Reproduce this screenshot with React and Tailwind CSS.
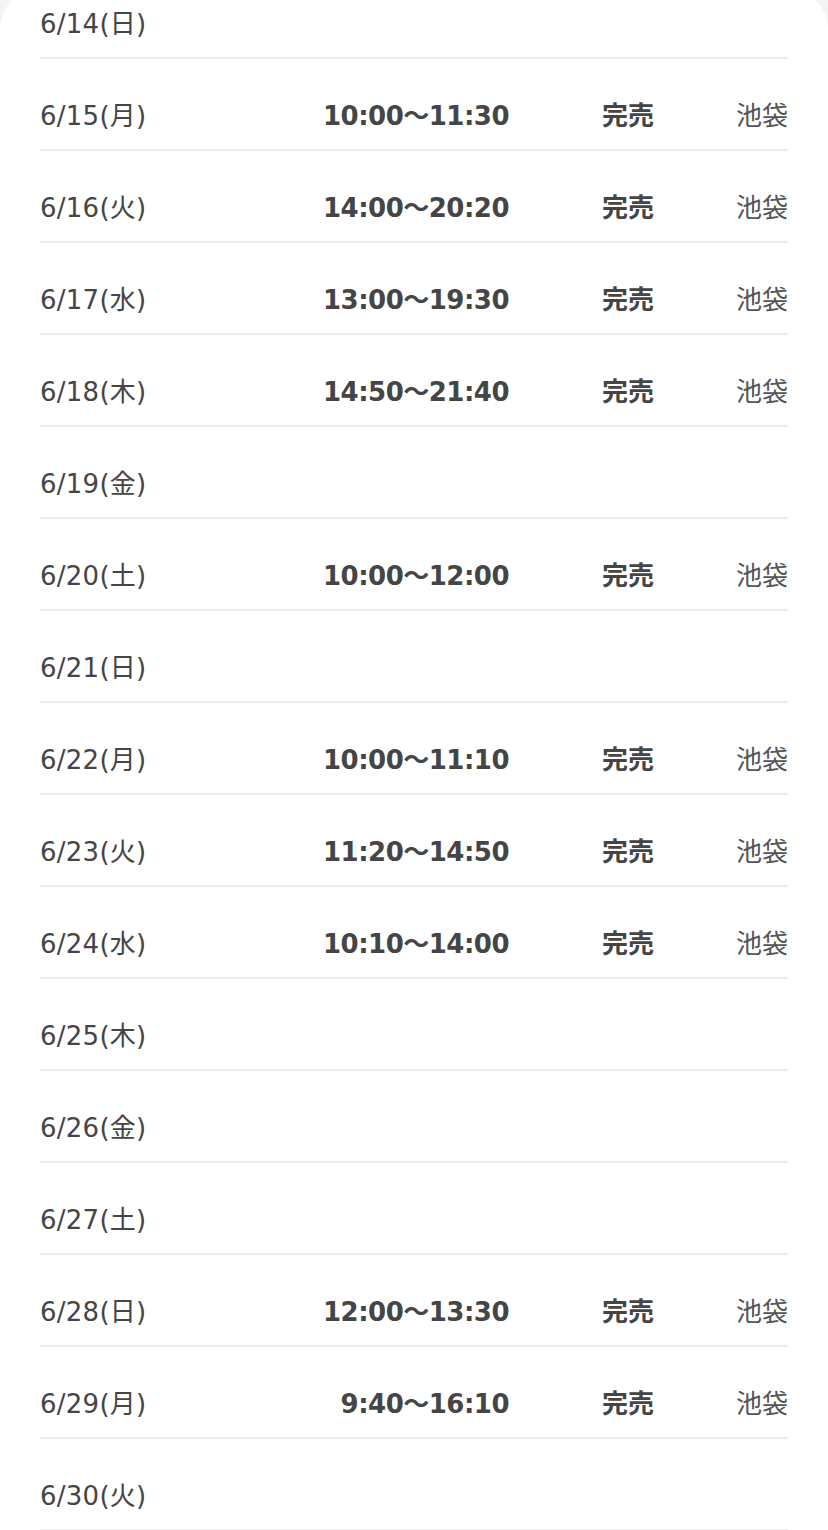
import React from 'react';

const rows = [
  { date: '6/14(日)' },
  { date: '6/15(月)', time: '10:00〜11:30', status: '完売', place: '池袋' },
  { date: '6/16(火)', time: '14:00〜20:20', status: '完売', place: '池袋' },
  { date: '6/17(水)', time: '13:00〜19:30', status: '完売', place: '池袋' },
  { date: '6/18(木)', time: '14:50〜21:40', status: '完売', place: '池袋' },
  { date: '6/19(金)' },
  { date: '6/20(土)', time: '10:00〜12:00', status: '完売', place: '池袋' },
  { date: '6/21(日)' },
  { date: '6/22(月)', time: '10:00〜11:10', status: '完売', place: '池袋' },
  { date: '6/23(火)', time: '11:20〜14:50', status: '完売', place: '池袋' },
  { date: '6/24(水)', time: '10:10〜14:00', status: '完売', place: '池袋' },
  { date: '6/25(木)' },
  { date: '6/26(金)' },
  { date: '6/27(土)' },
  { date: '6/28(日)', time: '12:00〜13:30', status: '完売', place: '池袋' },
  { date: '6/29(月)', time: '9:40〜16:10', status: '完売', place: '池袋' },
  { date: '6/30(火)' },
];

export default function App() {
  return (
    <div className="min-h-screen bg-[#f4f4f4] overflow-hidden">
      <div
        className="-mt-[11px] bg-white rounded-t-[40px] px-[40px] pt-[11px] text-[26px] leading-[36px] text-[#454545]"
        style={{ fontFamily: '"DejaVu Sans", "Noto Sans CJK JP", sans-serif' }}
      >
        {rows.map((row, idx) => (
          <div
            key={idx}
            className={`flex items-center border-b-2 border-[#ececec] pb-[15px] ${idx === 0 ? 'pt-[6px]' : 'pt-[39px]'}`}
          >
            <div className="w-[250px] tracking-[0.25px]">{row.date}</div>
            <div className="w-[219px] text-right font-bold tracking-[-0.5px]">{row.time}</div>
            <div className="pl-[93px] font-bold">{row.status}</div>
            <div className="flex-1 text-right text-[#555]">{row.place}</div>
          </div>
        ))}
      </div>
    </div>
  );
}
